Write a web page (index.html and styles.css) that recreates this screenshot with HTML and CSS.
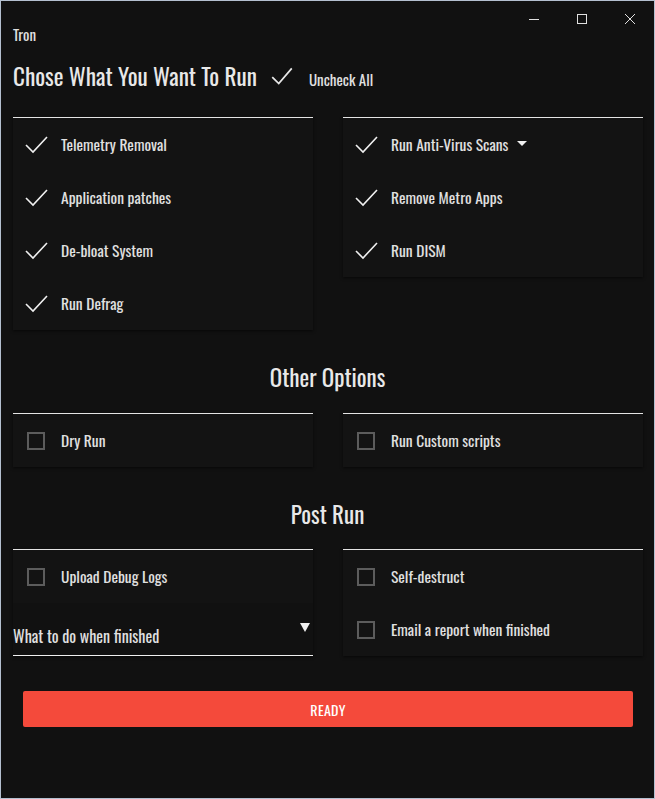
FILE: index.html
```html
<!DOCTYPE html>
<html>
<head>
<meta charset="utf-8">
<link rel="stylesheet" href="styles.css">
</head>
<body>
<div class="window">
  <div class="titlebar">
    <div class="app-title">Tron</div>
    <div class="controls">
      <span class="ctl"><svg width="12" height="12" viewBox="0 0 12 12"><path d="M1 6.5h10" stroke="#e0e0e0" stroke-width="1" fill="none"/></svg></span>
      <span class="ctl"><svg width="12" height="12" viewBox="0 0 12 12"><rect x="1.5" y="1.5" width="9" height="9" stroke="#e0e0e0" stroke-width="1" fill="none"/></svg></span>
      <span class="ctl"><svg width="12" height="12" viewBox="0 0 12 12"><path d="M1 1L11 11M11 1L1 11" stroke="#e0e0e0" stroke-width="1" fill="none"/></svg></span>
    </div>
  </div>
  <div class="content">
    <div class="head-row">
      <h1 class="heading">Chose What You Want To Run</h1>
      <svg class="check big" width="26" height="26" viewBox="0 0 24 24"><path d="M3 13l6 6L21 5" stroke="#e8e8e8" stroke-width="1.6" fill="none"/></svg>
      <span class="uncheck">Uncheck All</span>
    </div>
    <div class="grid first">
      <div class="panel">
        <div class="row"><svg class="check" width="24" height="24" viewBox="0 0 24 24"><path d="M2 12l7 7L23 4" stroke="#f0f0f0" stroke-width="1.6" fill="none"/></svg><span class="label">Telemetry Removal</span></div>
        <div class="row"><svg class="check" width="24" height="24" viewBox="0 0 24 24"><path d="M2 12l7 7L23 4" stroke="#f0f0f0" stroke-width="1.6" fill="none"/></svg><span class="label">Application patches</span></div>
        <div class="row"><svg class="check" width="24" height="24" viewBox="0 0 24 24"><path d="M2 12l7 7L23 4" stroke="#f0f0f0" stroke-width="1.6" fill="none"/></svg><span class="label">De-bloat System</span></div>
        <div class="row"><svg class="check" width="24" height="24" viewBox="0 0 24 24"><path d="M2 12l7 7L23 4" stroke="#f0f0f0" stroke-width="1.6" fill="none"/></svg><span class="label">Run Defrag</span></div>
      </div>
      <div class="panel">
        <div class="row"><svg class="check" width="24" height="24" viewBox="0 0 24 24"><path d="M2 12l7 7L23 4" stroke="#f0f0f0" stroke-width="1.6" fill="none"/></svg><span class="label">Run Anti-Virus Scans</span><svg class="caret" width="10" height="5" viewBox="0 0 10 5"><path d="M0 0h10L5 5z" fill="#f0f0f0"/></svg></div>
        <div class="row"><svg class="check" width="24" height="24" viewBox="0 0 24 24"><path d="M2 12l7 7L23 4" stroke="#f0f0f0" stroke-width="1.6" fill="none"/></svg><span class="label">Remove Metro Apps</span></div>
        <div class="row"><svg class="check" width="24" height="24" viewBox="0 0 24 24"><path d="M2 12l7 7L23 4" stroke="#f0f0f0" stroke-width="1.6" fill="none"/></svg><span class="label">Run DISM</span></div>
      </div>
    </div>

    <h2 class="section">Other Options</h2>
    <div class="grid">
      <div class="panel">
        <div class="row"><span class="box"></span><span class="label">Dry Run</span></div>
      </div>
      <div class="panel">
        <div class="row"><span class="box"></span><span class="label">Run Custom scripts</span></div>
      </div>
    </div>

    <h2 class="section post">Post Run</h2>
    <div class="grid">
      <div class="panel">
        <div class="row"><span class="box"></span><span class="label">Upload Debug Logs</span></div>
        <div class="select"><span>What to do when finished</span><svg class="sel-arrow" width="10" height="9" viewBox="0 0 10 9"><path d="M0 0h10L5 9z" fill="#f0f0f0"/></svg></div>
      </div>
      <div class="panel">
        <div class="row"><span class="box"></span><span class="label">Self-destruct</span></div>
        <div class="row"><span class="box"></span><span class="label">Email a report when finished</span></div>
      </div>
    </div>

    <button class="ready">READY</button>
  </div>
</div>
</body>
</html>
```

FILE: styles.css
```css
html, body {
  margin: 0;
  padding: 0;
  background: #111111;
}
body {
  font-family: "Oswald", "DejaVu Sans Condensed", sans-serif;
  font-weight: 400;
  color: #e0e0e0;
}
.window {
  width: 655px;
  height: 799px;
  box-sizing: border-box;
  border: 1px solid #b4c0d0;
  background: #111111;
}
.titlebar {
  display: flex;
  justify-content: space-between;
  align-items: flex-start;
}
.app-title {
  font-size: 15px;
  padding: 23px 0 0 12px;
  line-height: 20px;
}
.controls {
  display: flex;
  padding: 12px 0 0 0;
}
.ctl {
  width: 48px;
  display: flex;
  justify-content: center;
  height: 12px;
}
.ctl svg { display: block; }
.content {
  padding: 0 12px;
}
.head-row {
  display: flex;
  align-items: center;
  height: 40px;
  margin-top: 12px;
}
.heading {
  margin: 0;
  font-weight: 400;
  font-size: 23.2px;
  line-height: 32px;
  color: #e8e8e8;
}
.check.big {
  margin-left: 12px;
}
.uncheck {
  margin-left: 14px;
  font-size: 15px;
  padding-top: 5px;
}
.grid {
  display: grid;
  grid-template-columns: 300px 300px;
  column-gap: 30px;
  align-items: start;
  margin-top: 20px;
}
.grid.first {
  margin-top: 21px;
}
.panel {
  border-top: 1px solid #e4e4e4;
  background: #131313;
  box-shadow: 0 1px 3px rgba(0,0,0,0.6);
}
.row {
  display: flex;
  align-items: center;
  height: 53px;
  padding-left: 11px;
  font-size: 15.5px;
  color: #e0e0e0;
}
.row .label {
  margin-bottom: 2px;
}
.row .check {
  flex: none;
  margin-right: 13px;
}
.caret {
  margin-left: 9px;
  margin-top: -2px;
}
.box {
  flex: none;
  width: 14px;
  height: 14px;
  border: 2px solid #5c5c5c;
  margin: 0 16px 0 3px;
  box-sizing: content-box;
}
.section {
  margin: 31px 0 0 0;
  text-align: center;
  font-weight: 400;
  font-size: 23px;
  line-height: 32px;
  color: #e8e8e8;
}
.section + .grid {
  margin-top: 20px;
}
.section.post + .grid {
  margin-top: 19px;
}
.select {
  display: flex;
  align-items: center;
  justify-content: space-between;
  height: 52px;
  border-bottom: 1px solid #f0f0f0;
  font-size: 16px;
  background: #111111;
}
.select span {
  padding-top: 14px;
}
.sel-arrow {
  margin-right: 3px;
  margin-top: -4px;
}
.ready {
  display: block;
  width: 610px;
  height: 36px;
  margin: 35px 10px 0 10px;
  border: none;
  border-radius: 2px;
  background: #f44a3b;
  color: #ffffff;
  font-family: inherit;
  font-weight: 400;
  font-size: 14px;
  letter-spacing: 0.3px;
}
```
